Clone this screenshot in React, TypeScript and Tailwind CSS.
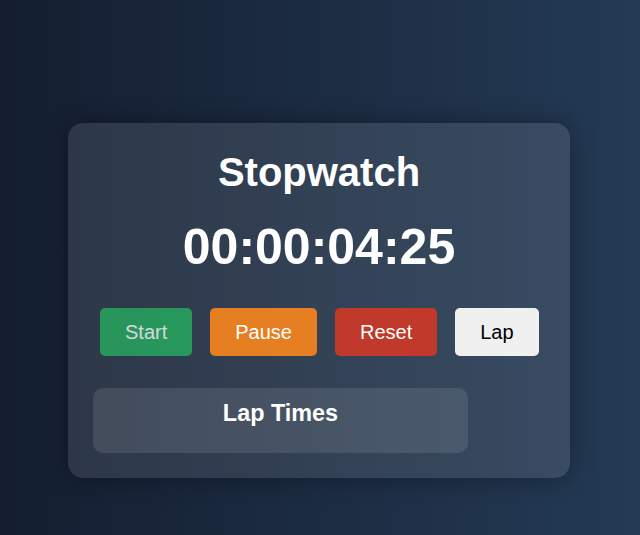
import React, { useState } from "react";

const laps: string[] = [];

function App() {
  const [time] = useState("00:00:04:25");

  return (
    <div className="min-h-[535px] w-full bg-gradient-to-r from-[#141e30] to-[#243b55] pt-[123px] font-['Liberation_Sans',Arial,sans-serif]">
      <div className="ml-[68px] flex w-[502px] flex-col items-center rounded-[15px] bg-white/10 px-8 pt-[26px] pb-[25px] shadow-[0_0_24px_rgba(0,0,0,0.35)]">
        <h1 className="text-[40px] leading-[46px] font-bold text-white">
          Stopwatch
        </h1>
        <div className="mt-[24px] text-[50px] leading-[57px] font-bold text-white">
          {time}
        </div>
        <div className="mt-[32px] flex w-full gap-[18px]">
          <button
            disabled
            className="h-[48px] rounded-[5px] bg-[#27ae60] px-[25px] text-[20px] text-white opacity-80"
          >
            Start
          </button>
          <button className="h-[48px] rounded-[5px] bg-[#e67e22] px-[25px] text-[20px] text-white">
            Pause
          </button>
          <button className="h-[48px] rounded-[5px] bg-[#c0392b] px-[25px] text-[20px] text-white">
            Reset
          </button>
          <button className="h-[48px] rounded-[5px] bg-[#f0f0f0] px-[25px] text-[20px] text-black">
            Lap
          </button>
        </div>
        <div className="mt-[32px] ml-[-7px] w-[375px] self-start rounded-[10px] bg-white/10 pt-3 pb-[26px]">
          <h3 className="text-center text-[23.4px] leading-[27px] font-bold text-white">
            Lap Times
          </h3>
          {laps.length > 0 && (
            <ul>
              {laps.map((lap, i) => (
                <li key={i}>{lap}</li>
              ))}
            </ul>
          )}
        </div>
      </div>
    </div>
  );
}

export default App;
